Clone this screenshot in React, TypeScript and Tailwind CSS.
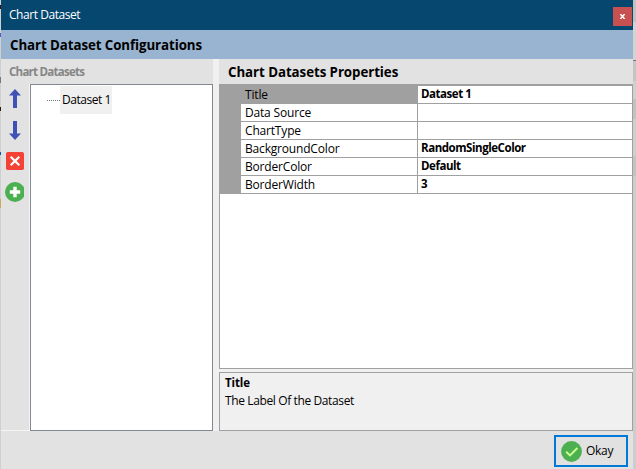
import React from "react";

type Property = { name: string; value: string };

const properties: Property[] = [
  { name: "Title", value: "Dataset 1" },
  { name: "Data Source", value: "" },
  { name: "ChartType", value: "" },
  { name: "BackgroundColor", value: "RandomSingleColor" },
  { name: "BorderColor", value: "Default" },
  { name: "BorderWidth", value: "3" },
];

function ArrowIcon({ down = false }: { down?: boolean }) {
  return (
    <svg width="12" height="19" viewBox="0 0 12 19" className={down ? "rotate-180" : ""}>
      <path d="M6 0 12 6.5H8V19H4V6.5H0Z" fill="#3f51b5" />
    </svg>
  );
}

function RemoveIcon() {
  return (
    <svg width="18" height="18" viewBox="0 0 18 18">
      <rect width="18" height="18" rx="1.8" fill="#f44336" />
      <path d="M4.7 4.7 13.3 13.3M13.3 4.7 4.7 13.3" stroke="#fff" strokeWidth="2.2" />
    </svg>
  );
}

function AddIcon() {
  return (
    <svg width="19" height="21" viewBox="0 0 19 21">
      <circle cx="10" cy="10" r="10" fill="#4caf50" />
      <path d="M10 4.8V15.2M4.8 10H15.2" stroke="#fff" strokeWidth="3.4" />
    </svg>
  );
}

function CheckIcon() {
  return (
    <svg width="21" height="21" viewBox="0 0 21 21">
      <circle cx="10.5" cy="10.5" r="10.4" fill="#4caf50" />
      <path d="M5.2 10.8 9 14.4 16.4 7" fill="none" stroke="#ccff90" strokeWidth="2" />
    </svg>
  );
}

function Backdrop({ side }: { side: "left" | "right" }) {
  if (side === "left") {
    return (
      <div className="flex w-px shrink-0 flex-col bg-[#d0d0d0]">
        <div className="h-[5px]" />
        <div className="h-1 bg-[#401010]" />
        <div className="h-6" />
        <div className="h-1 bg-[#5a5ac0]" />
        <div className="h-10" />
        <div className="h-[6px] bg-[#777]" />
        <div className="h-6" />
        <div className="h-1 bg-[#301808]" />
        <div className="h-[41px]" />
        <div className="h-[3px] bg-[#0060b0]" />
        <div className="h-[44px]" />
        <div className="h-[9px] bg-[#d0a860]" />
      </div>
    );
  }
  return (
    <div className="flex w-[3px] shrink-0 flex-col bg-[#cdcdcd]">
      <div className="h-[22px] bg-[#c2c2c2]" />
      <div className="h-[38px] bg-[#d3d3d3]" />
      <div className="h-px bg-[#777]" />
      <div className="h-5 bg-[#c5c5c5]" />
      <div className="h-[18px] bg-[#d0d0d0]" />
      <div className="h-5 bg-[#c2c2c2]" />
      <div className="h-[37px] bg-[#cfcfcf]" />
      <div className="h-5 bg-[#c3c3c3]" />
    </div>
  );
}

export default function App() {
  return (
    <div className="flex h-[469px] w-[636px] overflow-hidden whitespace-nowrap font-['Open_Sans','Noto_Sans',sans-serif] text-[12px] leading-[16px] text-black">
      <Backdrop side="left" />
      <div className="flex w-[632px] shrink-0 flex-col bg-[#e2e2e2]">
        <header className="flex h-[30px] shrink-0 items-start justify-between bg-[#05476f] pr-px pt-[7px] text-white">
          <span className="pl-[8px] tracking-[-0.45px]">Chart Dataset</span>
          <button className="flex h-[19px] w-[19px] items-center justify-center bg-[#c75050]">
            <svg width="5" height="5" viewBox="0 0 5 5" fill="none" stroke="#fff" strokeWidth="1.5">
              <path d="M.3 0 4.7 5M4.7 0 .3 5" />
            </svg>
          </button>
        </header>
        <div className="h-[29px] shrink-0 bg-[#99b4d1] pl-[9px] pt-[7px] text-[13.3px] font-bold tracking-[-0.08px]">
          Chart Dataset Configurations
        </div>
        <main className="flex h-[372px] shrink-0">
          <section className="flex w-[212px] shrink-0 flex-col">
            <h2 className="h-[25px] pl-[8px] pt-[5px] text-[11.5px] font-bold tracking-[-0.75px] text-[#868686]">Chart Datasets</h2>
            <div className="flex h-[347px]">
              <nav className="flex w-[29px] flex-col border-b border-r border-[#f5f5f5] pl-[4px] pt-[5px]">
                <div className="h-8 pl-1"><ArrowIcon /></div>
                <div className="h-[31px] pl-1"><ArrowIcon down /></div>
                <div className="h-[30px] pl-px"><RemoveIcon /></div>
                <AddIcon />
              </nav>
              <div className="flex w-[183px] items-start border border-[#828790] bg-white pl-4 pt-px">
                <div className="mt-[14px] w-[13px] border-t border-dotted border-[#777]" />
                <div className="h-7 w-[52px] bg-[#f0f0f0] pl-[2px] pt-[6px] tracking-[-0.45px]">Dataset 1</div>
              </div>
            </div>
          </section>
          <div className="w-[6px] shrink-0 bg-[#f0f0f0]" />
          <section className="flex w-[414px] shrink-0 flex-col bg-[#f0f0f0]">
            <h2 className="h-[25px] bg-[#e2e2e2] pl-[9px] pt-[5px] text-[13.3px] font-bold tracking-[-0.06px]">
              Chart Datasets Properties
            </h2>
            <div className="h-[285px] border border-[#a0a0a0] bg-white">
              <div className="border-t border-[#a0a0a0]">
                {properties.map((p, i) => (
                  <div key={p.name} className="flex h-[18px] leading-[18px]">
                    <div className="w-[21px] bg-[#a0a0a0]" />
                    <div className={`w-[177px] border-b border-r border-[#a0a0a0] pl-[4px] tracking-[-0.18px] ${i === 0 ? "bg-[#a0a0a0]" : ""}`}>
                      {p.name}
                    </div>
                    <div className="flex-1 border-b border-[#a0a0a0] pl-[3px] text-[11.5px] font-bold leading-[16px] tracking-[-0.45px]">{p.value}</div>
                  </div>
                ))}
              </div>
            </div>
            <div className="mt-[3px] h-[59px] border border-[#a0a0a0] pl-[5px] pt-[2px]">
              <div className="h-[18px] text-[11.5px] font-bold tracking-[-0.1px]">Title</div>
              <div className="tracking-[-0.38px]">The Label Of the Dataset</div>
            </div>
          </section>
        </main>
        <footer className="flex flex-1 justify-end pr-[5px] pt-1">
          <button className="flex h-8 w-[74px] items-center gap-[4px] border-2 border-[#0078d7] bg-[#e1e1e1] pl-[5px]">
            <CheckIcon />
            <span className="tracking-[-0.3px]">Okay</span>
          </button>
        </footer>
      </div>
      <Backdrop side="right" />
    </div>
  );
}
